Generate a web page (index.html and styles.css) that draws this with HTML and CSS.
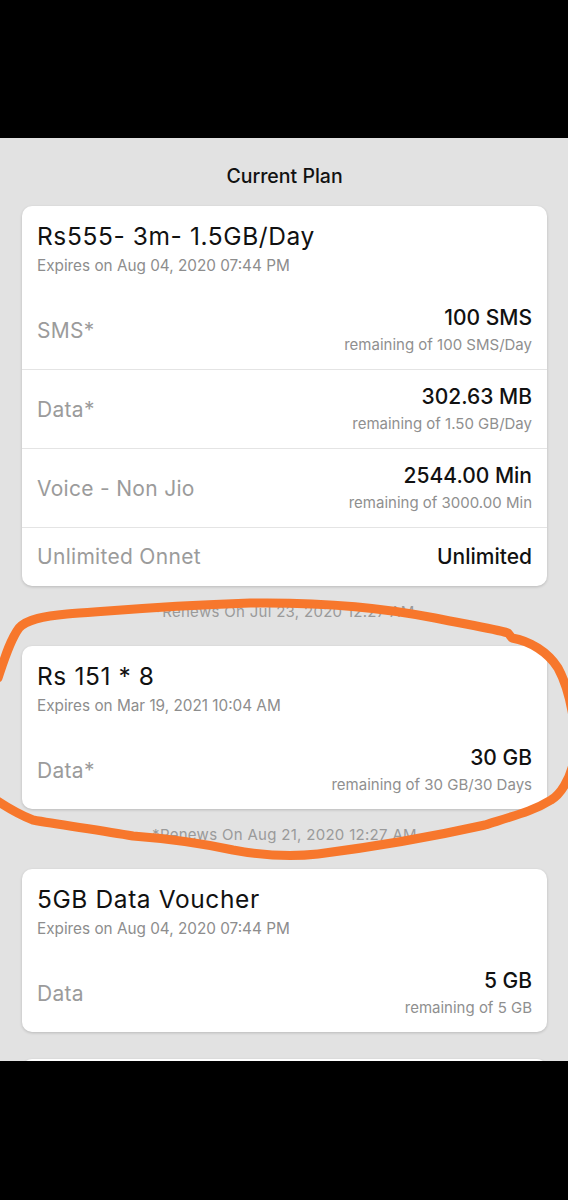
FILE: index.html
```html
<!DOCTYPE html>
<html lang="en">
<head>
  <meta charset="UTF-8">
  <meta name="viewport" content="width=device-width, initial-scale=1.0">
  <title>Current Plan</title>
  <link rel="stylesheet" href="styles.css">
</head>
<body>
  <div class="screen">
    <h1 class="page-title">Current Plan</h1>

    <div class="card">
      <div class="card-head">
        <div class="plan-name">Rs555- 3m- 1.5GB/Day</div>
        <div class="expires">Expires on Aug 04, 2020 07:44 PM</div>
      </div>
      <div class="row">
        <div class="label">SMS*</div>
        <div class="amount">
          <div class="value">100 SMS</div>
          <div class="sub">remaining of 100 SMS/Day</div>
        </div>
      </div>
      <div class="row">
        <div class="label">Data*</div>
        <div class="amount">
          <div class="value">302.63 MB</div>
          <div class="sub">remaining of 1.50 GB/Day</div>
        </div>
      </div>
      <div class="row">
        <div class="label">Voice - Non Jio</div>
        <div class="amount">
          <div class="value">2544.00 Min</div>
          <div class="sub">remaining of 3000.00 Min</div>
        </div>
      </div>
      <div class="row single">
        <div class="label">Unlimited Onnet</div>
        <div class="amount">
          <div class="value">Unlimited</div>
        </div>
      </div>
    </div>
    <div class="renews">*Renews On Jul 23, 2020 12:27 AM</div>

    <div class="card">
      <div class="card-head">
        <div class="plan-name">Rs 151 * 8</div>
        <div class="expires">Expires on Mar 19, 2021 10:04 AM</div>
      </div>
      <div class="row plain">
        <div class="label">Data*</div>
        <div class="amount">
          <div class="value">30 GB</div>
          <div class="sub">remaining of 30 GB/30 Days</div>
        </div>
      </div>
    </div>
    <div class="renews">*Renews On Aug 21, 2020 12:27 AM</div>

    <div class="card">
      <div class="card-head">
        <div class="plan-name">5GB Data Voucher</div>
        <div class="expires">Expires on Aug 04, 2020 07:44 PM</div>
      </div>
      <div class="row plain">
        <div class="label">Data</div>
        <div class="amount">
          <div class="value">5 GB</div>
          <div class="sub">remaining of 5 GB</div>
        </div>
      </div>
    </div>

    <div class="card next"></div>

    <!-- hand drawn marker circle -->
    <svg class="scribble" width="568" height="923" viewBox="0 138 568 923">
      <path d="M -2 678 C 4 660, 10 640, 19 628 C 27 619, 45 616, 67 614 C 110 611, 160 606, 250 603 C 320 602, 380 607, 435 618 C 470 625, 495 629, 508 633 L 512 638 C 530 641, 548 652, 558 668 C 570 690, 578 730, 574 760 C 570 780, 560 795, 551 800 C 535 810, 520 814, 485 825 C 440 835, 380 846, 318 854 C 290 857, 260 855, 233 850 C 200 843, 160 838, 133 836 C 100 830, 60 825, 33 820 C 20 815, 8 808, -4 800"
            fill="none" stroke="#f7772c" stroke-width="9" stroke-linecap="round" stroke-linejoin="round"/>
    </svg>
  </div>
</body>
</html>
```

FILE: styles.css
```css
body {
  margin: 0;
  background-color: #000;
  font-family: Inter, "Noto Sans", Arial, sans-serif;
}
.screen {
  position: relative;
  margin-top: 138px;
  height: 923px;
  overflow: hidden;
  background-color: #e2e2e2;
  padding: 0 21px 0 22px;
}
.page-title {
  margin: 0;
  padding: 26px 0 18px;
  font-size: 19.5px;
  line-height: 24px;
  font-weight: 500;
  text-align: center;
  color: #111;
}
.card {
  background-color: #fff;
  border-radius: 10px;
  box-shadow: 0 1px 3px rgba(0, 0, 0, 0.18);
}
.card.next {
  margin-top: 27px;
  height: 80px;
}
.card-head {
  padding: 16px 15px 15px;
}
.plan-name {
  font-size: 24.5px;
  line-height: 28px;
  letter-spacing: 0.6px;
  color: #111;
}
.expires {
  margin-top: 6px;
  font-size: 15.3px;
  line-height: 20px;
  color: #8d8d8d;
}
.row {
  display: flex;
  justify-content: space-between;
  align-items: center;
  padding: 15px;
  border-bottom: 1px solid #e4e4e4;
}
.row.single {
  border-bottom: none;
  padding: 16px 15px 17px;
}
.row.plain {
  border-bottom: none;
}
.label {
  font-size: 21px;
  letter-spacing: 0.3px;
  color: #9b9b9b;
}
.amount {
  text-align: right;
}
.value {
  font-size: 21px;
  line-height: 24px;
  font-weight: 500;
  color: #111;
}
.sub {
  margin-top: 6px;
  font-size: 15px;
  line-height: 18px;
  color: #8f8f8f;
}
.renews {
  margin: 16px 0 24px;
  font-size: 15px;
  line-height: 20px;
  letter-spacing: 0.3px;
  text-align: center;
  color: #9a9a9a;
}
.scribble {
  position: absolute;
  left: 0;
  top: 0;
  pointer-events: none;
}
```
